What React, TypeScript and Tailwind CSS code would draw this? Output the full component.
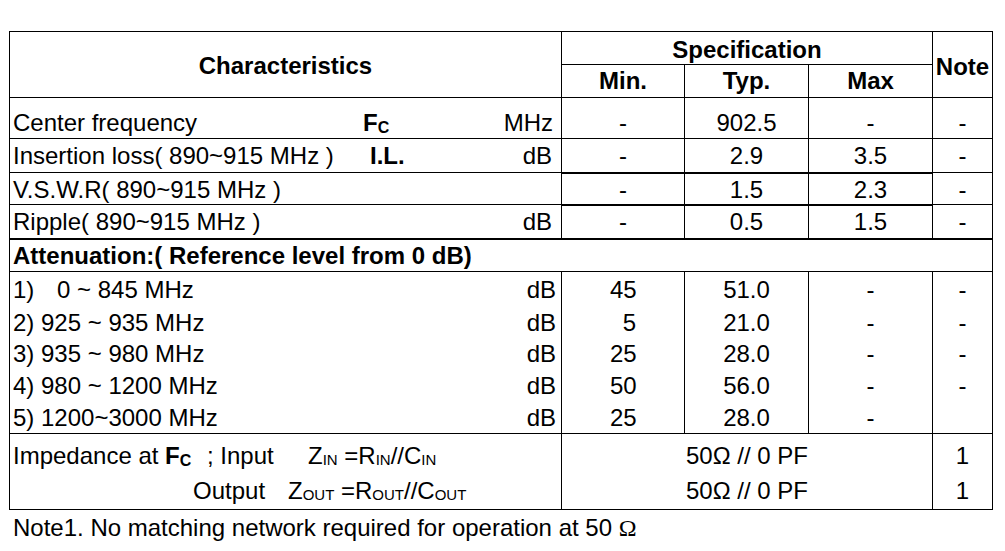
import React from "react";

function Dash() {
  return <span>-</span>;
}

type V = React.ReactNode;

function ValueCells({
  min,
  typ,
  max,
  note,
  thick,
  pad,
}: {
  min: V;
  typ: V;
  max: V;
  note: V;
  thick?: boolean;
  pad: string;
}) {
  const t = thick ? "border-t-2" : "border-t";
  return (
    <>
      <div className={`w-[123px] border-l border-black flex items-center justify-center ${t} ${pad}`}>{min}</div>
      <div className={`w-[124px] border-l border-black flex items-center justify-center ${t} ${pad}`}>{typ}</div>
      <div className={`w-[124px] border-l border-black flex items-center justify-center ${t} ${pad}`}>{max}</div>
      <div className={`w-[60px] border-l border-t border-black flex items-center justify-center ${pad}`}>{note}</div>
    </>
  );
}

function AttRow({
  label,
  min,
  typ,
  note,
  h,
  pad,
  first,
}: {
  label: V;
  min: string;
  typ: string;
  note: boolean;
  h: string;
  pad: string;
  first?: boolean;
}) {
  const bt = first ? "border-t" : "";
  return (
    <div className={`flex ${h}`}>
      <div className={`w-[551px] flex items-center pl-[3px] pr-[5px] border-black ${bt} ${pad}`}>
        <div className="flex-1 whitespace-pre">{label}</div>
        <div>dB</div>
      </div>
      <div className={`w-[123px] border-l border-black flex items-center justify-center ${bt} ${pad}`}>
        <span className="inline-block w-[26px] text-right">{min}</span>
      </div>
      <div className={`w-[124px] border-l border-black flex items-center justify-center ${bt} ${pad}`}>{typ}</div>
      <div className={`w-[124px] border-l border-black flex items-center justify-center ${bt} ${pad}`}>
        <Dash />
      </div>
      <div className={`w-[60px] border-l border-black flex items-center justify-center ${bt} ${pad}`}>
        {note ? <Dash /> : null}
      </div>
    </div>
  );
}

function Sub({ children }: { children: V }) {
  return <span className="text-[15px] align-[-1px]">{children}</span>;
}

export default function App() {
  return (
    <div className="bg-white w-[1005px] h-[551px] pt-[31px] pl-[9px] text-black font-['Liberation_Sans',Arial,sans-serif] text-[24px] leading-none">
      <div className="w-[984px] border border-black">
        {/* header */}
        <div className="flex h-[65px]">
          <div className="w-[551px] flex items-center justify-center font-bold pt-[2px]">Characteristics</div>
          <div className="w-[371px] border-l border-black flex flex-col">
            <div className="h-[32px] flex items-center justify-center font-bold pt-[4px]">Specification</div>
            <div className="h-[33px] flex border-t border-black font-bold">
              <div className="w-[122px] flex items-center justify-center pb-[1px]">Min.</div>
              <div className="w-[124px] border-l border-black flex items-center justify-center pb-[1px]">Typ.</div>
              <div className="w-[124px] border-l border-black flex items-center justify-center pb-[1px]">Max</div>
            </div>
          </div>
          <div className="w-[60px] border-l border-black flex items-center justify-center font-bold pt-[4px]">Note</div>
        </div>

        {/* Center frequency */}
        <div className="flex h-[41px]">
          <div className="w-[551px] flex items-center pl-[3px] pr-[8px] border-t border-black pt-[10px]">
            <div className="w-[350px]">Center frequency</div>
            <div className="font-bold">
              F<span className="text-[16px] align-[-2px]">C</span>
            </div>
            <div className="ml-auto">MHz</div>
          </div>
          <ValueCells min={<Dash />} typ="902.5" max={<Dash />} note={<Dash />} pad="pt-[10px]" />
        </div>

        {/* Insertion loss */}
        <div className="flex h-[34px]">
          <div className="w-[551px] flex items-center pl-[3px] pr-[9px] border-t border-black pt-[1px]">
            <div className="w-[357px]">Insertion loss( 890~915 MHz )</div>
            <div className="font-bold">I.L.</div>
            <div className="ml-auto">dB</div>
          </div>
          <ValueCells min={<Dash />} typ="2.9" max="3.5" note={<Dash />} pad="pt-[1px]" />
        </div>

        {/* VSWR */}
        <div className="flex h-[32px]">
          <div className="w-[551px] flex items-center pl-[3px] pr-[9px] border-t border-black pt-[3px]">
            <div>V.S.W.R( 890~915 MHz )</div>
          </div>
          <ValueCells min={<Dash />} typ="1.5" max="2.3" note={<Dash />} thick pad="pt-[2px]" />
        </div>

        {/* Ripple */}
        <div className="flex h-[34px]">
          <div className="w-[551px] flex items-center pl-[3px] pr-[9px] border-t border-black pt-[1px]">
            <div>Ripple( 890~915 MHz )</div>
            <div className="ml-auto">dB</div>
          </div>
          <ValueCells min={<Dash />} typ="0.5" max="1.5" note={<Dash />} thick pad="pt-[0px]" />
        </div>

        {/* Attenuation header */}
        <div className="flex h-[33px] border-t-2 border-black items-center pl-[3px] font-bold pt-[1px]">
          Attenuation:( Reference level from 0 dB)
        </div>

        <AttRow
          first
          h="h-[36px]"
          pad="pt-[1px]"
          label={
            <>
              <span className="inline-block w-[44px]">1)</span>0 ~ 845 MHz
            </>
          }
          min="45"
          typ="51.0"
          note
        />
        <AttRow h="h-[31px]" pad="pt-[0px]" label="2) 925 ~ 935 MHz" min="5" typ="21.0" note />
        <AttRow h="h-[32px]" pad="pt-[0px]" label="3) 935 ~ 980 MHz" min="25" typ="28.0" note />
        <AttRow h="h-[32px]" pad="pt-[0px]" label="4) 980 ~ 1200 MHz" min="50" typ="56.0" note />
        <AttRow h="h-[31px]" pad="pt-[1px]" label="5) 1200~3000 MHz" min="25" typ="28.0" note={false} />

        {/* Impedance */}
        <div className="flex h-[76px] border-t border-black">
          <div className="w-[551px] flex flex-col pl-[3px]">
            <div className="h-[40px] flex items-center pt-[5px] whitespace-pre">
              <span className="inline-block w-[194px]">
                Impedance at{" "}
                <span className="font-bold">
                  F<span className="text-[16px] align-[-2px]">C</span>
                </span>
              </span>
              <span className="inline-block w-[101px]">; Input</span>
              <span>
                Z<Sub>IN</Sub> =R<Sub>IN</Sub>//C<Sub>IN</Sub>
              </span>
            </div>
            <div className="h-[36px] flex items-center whitespace-pre">
              <span className="inline-block w-[180px]"></span>
              <span className="inline-block w-[95px]">Output</span>
              <span>
                Z<Sub>OUT</Sub> =R<Sub>OUT</Sub>//C<Sub>OUT</Sub>
              </span>
            </div>
          </div>
          <div className="w-[371px] border-l border-black flex flex-col">
            <div className="h-[40px] flex items-center justify-center pt-[5px]">50Ω // 0 PF</div>
            <div className="h-[36px] flex items-center justify-center">50Ω // 0 PF</div>
          </div>
          <div className="w-[60px] border-l border-black flex flex-col">
            <div className="h-[40px] flex items-center justify-center pt-[5px]">1</div>
            <div className="h-[36px] flex items-center justify-center">1</div>
          </div>
        </div>
      </div>

      <div className="mt-[6px] pl-[4px]">
        Note1. No matching network required for operation at 50{" "}
        <span className="font-['Liberation_Serif',serif]">Ω</span>
      </div>
    </div>
  );
}
